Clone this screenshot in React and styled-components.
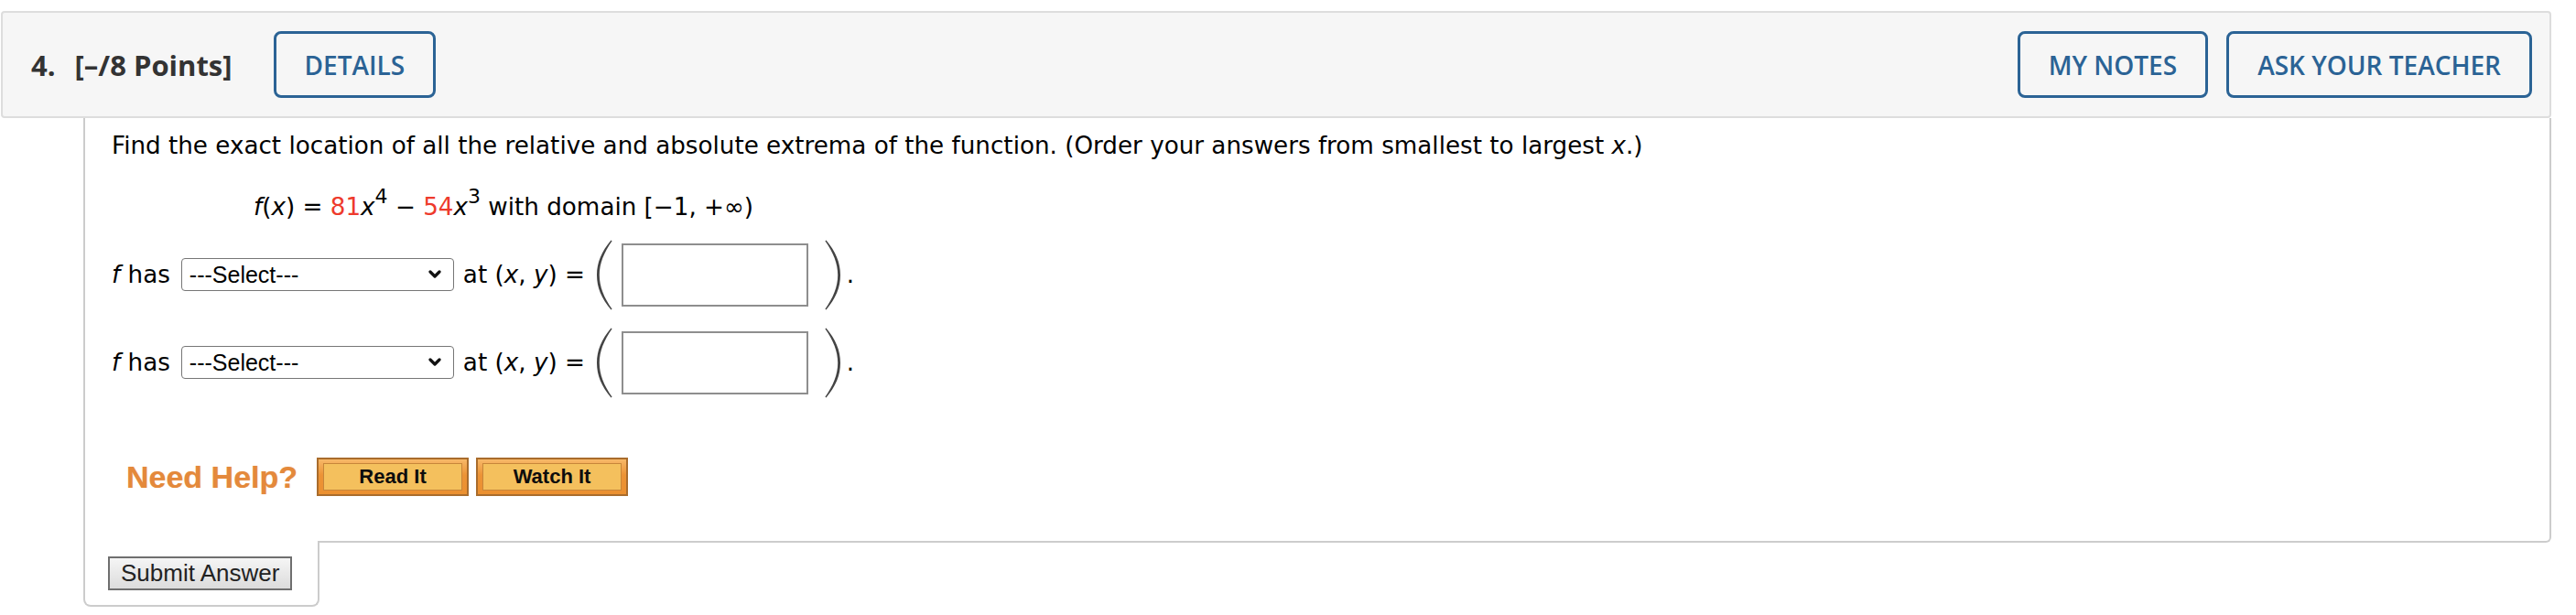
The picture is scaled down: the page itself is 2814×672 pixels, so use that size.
import React from "react";
import styled, { createGlobalStyle } from "styled-components";

const GlobalStyle = createGlobalStyle`
  html, body { margin: 0; padding: 0; background: #ffffff; }
  * { box-sizing: border-box; }
`;

const Page = styled.div`
  padding: 12px 27px 0 1px;
  width: 2814px;
`;

const Header = styled.div`
  display: flex;
  align-items: center;
  height: 117px;
  padding: 0 19px 0 31px;
  background: #f6f6f6;
  border: 2px solid #dddddd;
  border-radius: 4px;
  font-family: "Open Sans", "Liberation Sans", sans-serif;
`;

const Title = styled.div`
  display: flex;
  align-items: baseline;
  gap: 21px;
  font-size: 31px;
  font-weight: 700;
  color: #333333;
  margin-right: 45px;
`;

const OutlineButton = styled.button`
  height: 73px;
  padding: 0 31px;
  border: 3px solid #2b6395;
  border-radius: 8px;
  background: transparent;
  color: #2b6395;
  font-family: "Open Sans", "Liberation Sans", sans-serif;
  font-size: 28px;
  font-weight: 600;
  text-transform: uppercase;
  white-space: nowrap;
`;

const Spacer = styled.div`
  flex: 1;
`;

const ButtonGroup = styled.div`
  display: flex;
  gap: 20px;
`;

const Main = styled.div`
  margin-left: 90px;
  border: 2px solid #cccccc;
  border-top: none;
  border-bottom-right-radius: 6px;
  padding: 15px 0 49px 29px;
  font-family: "DejaVu Sans", Verdana, sans-serif;
  font-size: 26.2px;
  line-height: 31px;
  color: #000000;
`;

const Prompt = styled.p`
  margin: 0;
`;

const FormulaLine = styled.p`
  margin: 36px 0 0 155px;
`;

const Red = styled.span`
  color: #ee3a2c;
`;

const Sup = styled.sup`
  font-size: 22px;
  line-height: 0;
  vertical-align: 13px;
`;

const AnswerRow = styled.div`
  display: flex;
  align-items: center;
  height: 76px;
  margin-top: ${(p) => p.$top}px;
  white-space: pre;
`;

const SelectWrap = styled.div`
  position: relative;
  margin: 0 10px 0 12px;
  display: flex;
`;

const Select = styled.select`
  appearance: none;
  -webkit-appearance: none;
  width: 298px;
  height: 36px;
  padding: 0 30px 0 8px;
  border: 1px solid #767676;
  border-radius: 4px;
  background: #ffffff;
  font-family: "Liberation Sans", Arial, sans-serif;
  font-size: 25px;
  color: #000000;
`;

const Chevron = styled.svg`
  position: absolute;
  right: 14px;
  top: 13px;
  pointer-events: none;
`;

const Paren = styled.svg`
  display: block;
  flex: none;
  margin: ${(p) => p.$margin};
`;

const AnswerBox = styled.input`
  width: 204px;
  height: 69px;
  border: 2px solid #8e8e8e;
  background: #ffffff;
  padding: 0 6px;
  font-family: "DejaVu Sans", sans-serif;
  font-size: 26px;
`;

const HelpRow = styled.div`
  display: flex;
  align-items: center;
  margin: 66px 0 0 16px;
  height: 42px;
`;

const NeedHelp = styled.span`
  font-family: "Liberation Sans", Arial, sans-serif;
  font-weight: 700;
  font-size: 34px;
  color: #e4893b;
  text-shadow: 0 0 1px rgba(228, 137, 59, 0.55);
  margin-right: 21px;
`;

const HelpButton = styled.button`
  display: flex;
  width: 166px;
  height: 42px;
  padding: 4px 5px 4px 5px;
  margin-right: 8px;
  border: 2px solid #a96c2c;
  background: linear-gradient(#f7b868, #ec9336 45%, #eb9030);
`;

const HelpInner = styled.span`
  flex: 1;
  display: flex;
  align-items: center;
  justify-content: center;
  border: 1.5px solid #c7863a;
  background: #f4c05d;
  font-family: "Liberation Sans", Arial, sans-serif;
  font-weight: 700;
  font-size: 22px;
  color: #0d0d0d;
`;

const SubmitTab = styled.div`
  margin: -2px 0 0 90px;
  width: 258px;
  padding: 17px 0 16px 25px;
  background: #ffffff;
  border: 2px solid #cccccc;
  border-top: none;
  border-radius: 0 0 8px 8px;
`;

const SubmitButton = styled.button`
  display: block;
  height: 37px;
  padding: 0 12px;
  border: 2px solid #6f6f6f;
  background: linear-gradient(#f5f5f5, #dcdcdc);
  font-family: "Liberation Sans", Arial, sans-serif;
  font-size: 26px;
  color: #222222;
`;

function LeftParen() {
  return (
    <Paren width="18" height="77" viewBox="0 0 18 77" $margin="0 10px 0 12px">
      <path
        d="M16.5 0.5 C6 13 1 25 1 38.5 C1 52 6 64 16.5 76.5 L17.6 75.8 C8.6 63 3.8 51 3.8 38.5 C3.8 26 8.6 14 17.6 1.2 Z"
        fill="#444444"
      />
    </Paren>
  );
}

function RightParen() {
  return (
    <Paren width="18" height="77" viewBox="0 0 18 77" $margin="0 6px 0 18px">
      <path
        d="M1.5 0.5 C12 13 17 25 17 38.5 C17 52 12 64 1.5 76.5 L0.4 75.8 C9.4 63 14.2 51 14.2 38.5 C14.2 26 9.4 14 0.4 1.2 Z"
        fill="#444444"
      />
    </Paren>
  );
}

function Row({ top }) {
  return (
    <AnswerRow $top={top}>
      <span>
        <i>f</i> has
      </span>
      <SelectWrap>
        <Select defaultValue="">
          <option value="">---Select---</option>
          <option>a relative maximum</option>
          <option>a relative minimum</option>
          <option>an absolute maximum</option>
          <option>an absolute minimum</option>
        </Select>
        <Chevron width="14" height="10" viewBox="0 0 14 10">
          <path d="M2 2 L7 7 L12 2" fill="none" stroke="#111" strokeWidth="3.2" strokeLinecap="round" strokeLinejoin="round" />
        </Chevron>
      </SelectWrap>
      <span>
        at (<i>x</i>, <i>y</i>) =
      </span>
      <LeftParen />
      <AnswerBox type="text" />
      <RightParen />
      <span>.</span>
    </AnswerRow>
  );
}

export default function App() {
  return (
    <>
      <GlobalStyle />
      <Page>
        <Header>
          <Title>
            <span>4.</span>
            <span>[–/8 Points]</span>
          </Title>
          <OutlineButton>Details</OutlineButton>
          <Spacer />
          <ButtonGroup>
            <OutlineButton>My Notes</OutlineButton>
            <OutlineButton>Ask Your Teacher</OutlineButton>
          </ButtonGroup>
        </Header>
        <Main>
          <Prompt>
            Find the exact location of all the relative and absolute extrema of the function. (Order your answers from smallest to largest <i>x</i>.)
          </Prompt>
          <FormulaLine>
            <i>f</i>(<i>x</i>) = <Red>81</Red>
            <i>x</i>
            <Sup>4</Sup> − <Red>54</Red>
            <i>x</i>
            <Sup>3</Sup> with domain [−1, +∞)
          </FormulaLine>
          <Row top={20} />
          <Row top={20} />
          <HelpRow>
            <NeedHelp>Need Help?</NeedHelp>
            <HelpButton>
              <HelpInner>Read It</HelpInner>
            </HelpButton>
            <HelpButton>
              <HelpInner>Watch It</HelpInner>
            </HelpButton>
          </HelpRow>
        </Main>
        <SubmitTab>
          <SubmitButton>Submit Answer</SubmitButton>
        </SubmitTab>
      </Page>
    </>
  );
}
